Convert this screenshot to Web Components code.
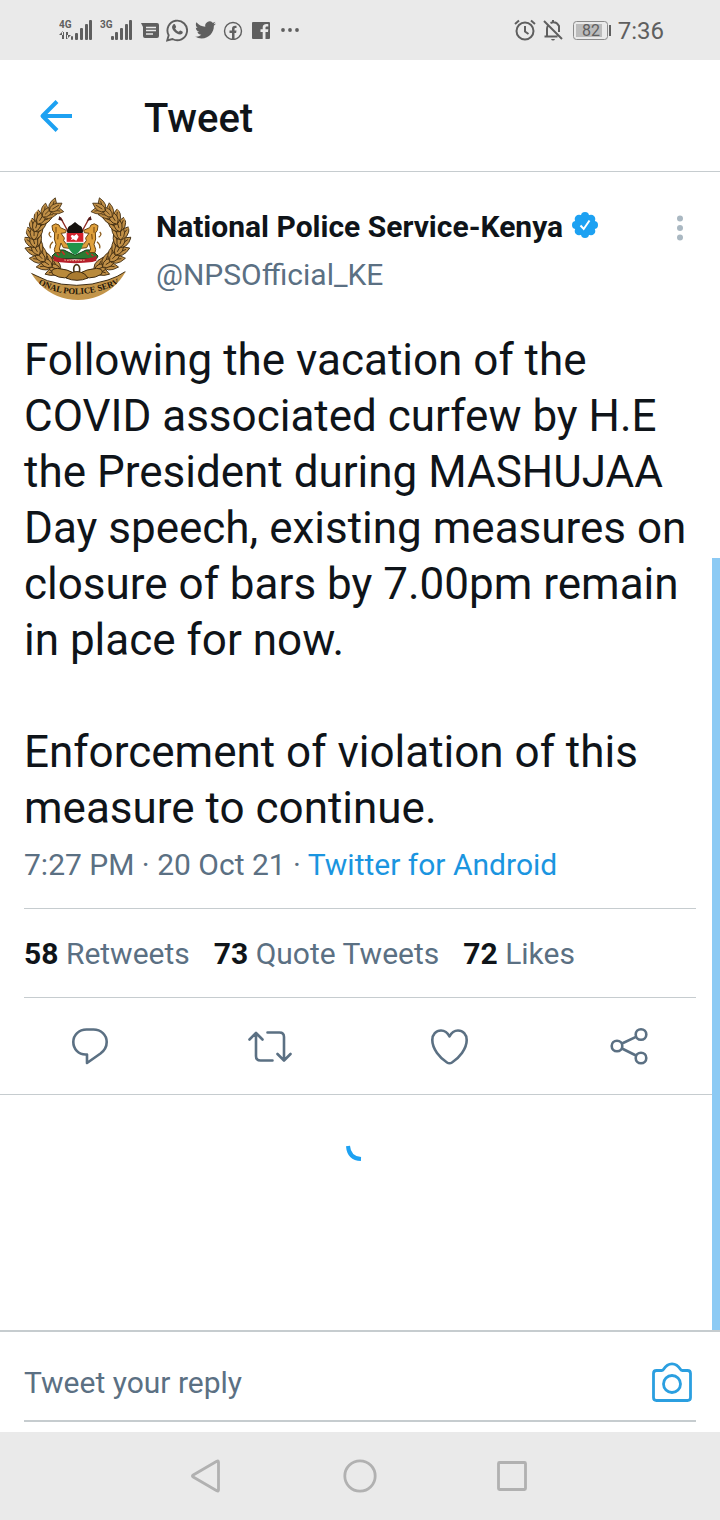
<!DOCTYPE html>
<html lang="en">
<head>
<meta charset="utf-8">
<meta name="viewport" content="width=device-width, initial-scale=1">
<title>Tweet</title>
<style>
  html, body { margin: 0; }
  body {
    --ink: #0f1419; --muted: #5b7083; --blue: #1da1f2; --link: #1b95e0; --line: #c6cccf;
    background: #fff; color: var(--ink);
    font-family: Roboto, "Liberation Sans", sans-serif;
  }
</style>
</head>
<body>
<tweet-screen></tweet-screen>

<template id="t-screen">
  <style>
    :host { display: flex; flex-direction: column; min-height: 100vh; }
    main { position: relative; flex: 1; display: flex; flex-direction: column; }
    .scroll { position: absolute; right: 0; bottom: 0; width: 8px; height: 66.67%; background: #8ccaf4; }
  </style>
  <status-bar></status-bar>
  <title-bar>Tweet</title-bar>
  <main>
    <tweet-post>
      <span slot="name">National Police Service-Kenya</span>
      <span slot="handle">@NPSOfficial_KE</span>
      <span slot="text">Following the vacation of the COVID associated curfew by H.E the President during MASHUJAA Day speech, existing measures on closure of bars by 7.00pm remain in place for now.

Enforcement of violation of this measure to continue.</span>
      <span slot="time">7:27 PM · 20 Oct 21</span>
      <span slot="source">Twitter for Android</span>
      <tweet-stat slot="stats" count="58">Retweets</tweet-stat>
      <tweet-stat slot="stats" count="73">Quote Tweets</tweet-stat>
      <tweet-stat slot="stats" count="72">Likes</tweet-stat>
    </tweet-post>
    <loading-spinner></loading-spinner>
    <div class="scroll"></div>
  </main>
  <reply-box></reply-box>
  <nav-bar></nav-bar>
</template>

<template id="t-status">
  <style>
    :host { display: flex; align-items: center; justify-content: space-between; height: 60px; padding: 0 56px 0 59px; background: #eaeaea; color: #5f5f5f; }
    div { display: flex; align-items: center; gap: 7px; }
    svg { display: block; flex: none; }
    text { font-family: Roboto, sans-serif; fill: #5f5f5f; }
    time { padding-top: 2px; font-size: 24px; line-height: 32px; }
  </style>
  <div>
    <svg width="34" height="24" viewBox="0 0 34 24" fill="#5f5f5f"><text x="0" y="10" font-size="10" font-weight="700">4G</text><path d="M3 14h2v7H3zM4 13l-4 4h4zM7 14h2v7H7zM8 21l4-4H8z"/><rect x="12" y="18" width="2" height="4" rx="1"/><rect x="16" y="15" width="3" height="7" rx="1"/><rect x="21" y="10" width="3" height="12" rx="1"/><rect x="26" y="6" width="3" height="16" rx="1"/><rect x="30" y="2" width="3" height="20" rx="1"/></svg>
    <svg width="34" height="24" viewBox="0 0 34 24" fill="#5f5f5f"><text x="0" y="10" font-size="10" font-weight="700">3G</text><rect x="11" y="18" width="3" height="4" rx="1"/><rect x="15" y="14" width="3" height="8" rx="1"/><rect x="20" y="10" width="3" height="12" rx="1"/><rect x="25" y="6" width="3" height="16" rx="1"/><rect x="29" y="2" width="3" height="20" rx="1"/></svg>
    <svg width="18" height="20" viewBox="0 0 18 20"><path d="M0 3h16q2 0 2 2v11q0 2-2 2H4q-2 0-2-2V7z" fill="#5f5f5f"/><path d="M5 7.500h10M5 10.500h10M5 14h7" stroke="#eaeaea" stroke-width="1.600"/></svg>
    <svg width="22" height="24" viewBox="0 0 22 24"><path d="M1.200 22.500l1.500-5.300A9.800 9.800 0 1 1 6.500 21z" fill="none" stroke="#5f5f5f" stroke-width="1.900"/><path d="M7.300 6.500c1-.9 1.700-.4 2 .4l.8 1.800c.2.600-.8 1.300-.9 1.700.8 1.600 2 2.600 3.600 3.300.5-.2 1-1.400 1.600-1.200l2 1c.7.400.3 1.700-.3 2.200-1.500 1.300-3.400.7-5.200-.2-2.200-1.100-3.900-3.100-4.600-5-.5-1.500-.2-2.900 1-4z" fill="#5f5f5f"/></svg>
    <svg width="21" height="20" viewBox="0 2 24 20"><path fill="#5f5f5f" d="M23.950 4.570a10 10 0 0 1-2.820.770 4.960 4.960 0 0 0 2.160-2.720c-.950.550-2 .960-3.130 1.180a4.920 4.920 0 0 0-8.380 4.480C7.690 8.090 4.070 6.130 1.640 3.160a4.820 4.820 0 0 0-.670 2.480c0 1.710.870 3.210 2.190 4.100a4.900 4.900 0 0 1-2.230-.620v.060a4.920 4.920 0 0 0 3.950 4.830 5 5 0 0 1-2.210.080 4.940 4.940 0 0 0 4.600 3.420A9.870 9.870 0 0 1 0 19.540a14 14 0 0 0 7.550 2.210c9.050 0 14-7.500 14-13.980 0-.210 0-.420-.020-.630a9.940 9.940 0 0 0 2.420-2.570z"/></svg>
    <svg width="22" height="20" viewBox="0 0 22 20"><circle cx="10" cy="11" r="8.500" fill="none" stroke="#5f5f5f" stroke-width="1.400"/><path d="M9 19v-6H6.500v-2.500H9V9c0-2.500 1.400-3.600 4.500-3.200V8c-1.500-.2-2 0-2 1.300v1.200h2l-.4 2.500h-1.600v6z" fill="#5f5f5f"/></svg>
    <svg width="18" height="20" viewBox="0 0 18 20"><path d="M1 2h16q1 0 1 1v15q0 1-1 1h-3.500v-7H16l.3-2.700h-2.800V7.800c0-1 .4-1.300 2.800-1.200V4.200c-4-.5-5.600.7-5.600 3.300v1.800H8.500V12h2.200v7H1q-1 0-1-1V3q0-1 1-1z" fill="#5f5f5f"/></svg>
    <svg width="24" height="20" viewBox="0 0 24 20" fill="#5f5f5f"><circle cx="6" cy="10" r="1.900"/><circle cx="13" cy="10" r="1.900"/><circle cx="20" cy="10" r="1.900"/></svg>
  </div>
  <div>
    <svg width="22" height="24" viewBox="0 0 22 24" fill="none" stroke="#5f5f5f" stroke-width="2"><circle cx="11" cy="13" r="8.500"/><path d="M11 8v5.500l3.500 2.500M1 6l4-3.500M21 6l-4-3.500"/></svg>
    <svg width="20" height="24" viewBox="0 0 20 24" fill="none" stroke="#5f5f5f" stroke-width="2"><path d="M1 3l18 18M1.500 18.500h13M4 18v-7q0-2 1-3.500M7.500 5Q13 2.500 16 8v6M10 2v2"/><path d="M8 21h4q-.5 1.500-2 1.500T8 21z" fill="#5f5f5f" stroke="none"/></svg>
    <svg width="41" height="24" viewBox="0 0 41 24"><rect x="3.500" y="3.500" width="34" height="18" rx="3" fill="none" stroke="#8b8b8b"/><rect x="6" y="6" width="26" height="13" fill="#bcbcbc"/><rect x="39" y="7" width="2" height="11" fill="#5f5f5f"/><text x="21" y="18" text-anchor="middle" font-size="16">82</text></svg>
    <time>7:36</time>
  </div>
</template>

<template id="t-title">
  <style>
    :host { display: flex; align-items: center; gap: 64px; height: 111px; padding: 0 32px; border-bottom: 1px solid var(--line); }
    button { display: block; padding: 0; border: 0; background: none; }
    svg { display: block; }
    h1 { margin: 6px 0 0; font-size: 40px; line-height: 48px; font-weight: 500; }
  </style>
  <button aria-label="Back"><svg width="48" height="48" viewBox="0 0 48 48" fill="none" stroke="#1da1f2" stroke-width="4" stroke-linejoin="round"><path d="M40 24H12M25 9.500L10.500 24 25 38.500"/></svg></button>
  <h1><slot></slot></h1>
</template>

<template id="t-post">
  <style>
    :host { display: block; border-bottom: 1px solid var(--line); }
    header { display: flex; gap: 24px; padding: 20px 24px 32px; }
    nps-emblem { flex: none; }
    .who { flex: 1; min-width: 0; padding-top: 11px; font-size: 30px; line-height: 48px; }
    .name { display: flex; align-items: center; gap: 8px; color: inherit; font-weight: 700; text-decoration: none; }
    .handle { color: var(--muted); }
    button { padding: 0; border: 0; background: none; }
    svg { display: block; flex: none; }
    .more { align-self: flex-start; margin-top: 20px; }
    .text { margin: 0; padding: 0 24px; font-size: 44px; line-height: 56px; white-space: pre-line; }
    .meta { margin: 9px 24px 23px; color: var(--muted); font-size: 30px; line-height: 40px; }
    .meta a { color: var(--link); text-decoration: none; }
    .stats { display: flex; align-items: center; gap: 24px; height: 88px; margin: 0 24px; border: solid var(--line); border-width: 1px 0; }
    .actions { display: flex; height: 96px; }
    .actions button { flex: 1; display: flex; align-items: center; justify-content: center; }
  </style>
  <article>
    <header>
      <nps-emblem></nps-emblem>
      <div class="who">
        <a class="name" href="#profile"><slot name="name"></slot>
          <svg width="28" height="30" viewBox="1 0 28 30"><g fill="#1da1f2"><circle cx="15" cy="13" r="10.500"/><circle cx="15" cy="4" r="4"/><circle cx="21" cy="7" r="4.300"/><circle cx="24" cy="13" r="4"/><circle cx="21" cy="19" r="4.300"/><circle cx="15" cy="22" r="4"/><circle cx="9" cy="19" r="4.300"/><circle cx="6" cy="13" r="4"/><circle cx="9" cy="7" r="4.300"/></g><path d="M10.500 13.500l3.200 3.500 5.800-8.500" fill="none" stroke="#fff" stroke-width="2"/></svg>
        </a>
        <div class="handle"><slot name="handle"></slot></div>
      </div>
      <button class="more" aria-label="More"><svg width="32" height="32" viewBox="0 0 32 32" fill="#aab8c2"><circle cx="16" cy="6.500" r="3"/><circle cx="16" cy="16" r="3"/><circle cx="16" cy="25.500" r="3"/></svg></button>
    </header>
    <p class="text"><slot name="text"></slot></p>
    <div class="meta"><slot name="time"></slot> · <a href="#source"><slot name="source"></slot></a></div>
    <div class="stats"><slot name="stats"></slot></div>
    <div class="actions">
      <button aria-label="Reply"><svg width="48" height="48" viewBox="0 0 48 48" fill="none" stroke="#5b7083" stroke-width="2.600" stroke-linejoin="round"><path d="M20.500 7.500h7C35 7.500 40.700 13 40.700 20c0 5-2.200 8.500-6.200 11.500L21 41v-8.500h-1.500C12.500 32.300 7.300 27 7.300 20S13 7.500 20.500 7.500z"/></svg></button>
      <button aria-label="Retweet"><svg width="48" height="48" viewBox="0 0 48 48" fill="none" stroke="#5b7083" stroke-width="2.600" stroke-linecap="round" stroke-linejoin="round"><path d="M3.500 17.500l6.500-6.500 6.500 6.500M10 11.500v22.500q0 4.500 4.500 4.500h12M21.500 10.500h12q4.500 0 4.500 4.500v23M31.500 32l6.500 6.500 6.500-6.500"/></svg></button>
      <button aria-label="Like"><svg width="48" height="48" viewBox="0 0 48 48" fill="none" stroke="#5b7083" stroke-width="2.600" stroke-linejoin="round"><path d="M23.500 14.500C21.500 10.500 18.500 8.500 15 8.500 10 8.500 6.300 12.500 6.300 18 6.300 27 14 36 21 40.500q2.500 1.600 5 0C33 36 40.700 27 40.700 18c0-5.500-3.700-9.500-8.700-9.500-3.500 0-6.500 2-8.500 6z"/></svg></button>
      <button aria-label="Share"><svg width="48" height="48" viewBox="0 0 48 48" fill="none" stroke="#5b7083" stroke-width="2.600"><circle cx="11" cy="24" r="5.300"/><circle cx="35" cy="12.500" r="5.300"/><circle cx="35" cy="36" r="5.300"/><path d="M16 21.500L30 14.800M16 26.500L30 33.500"/></svg></button>
    </div>
  </article>
</template>

<template id="t-stat">
  <style>
    :host { display: block; padding-top: 2px; font-size: 30px; line-height: 40px; }
    a { color: var(--muted); text-decoration: none; }
    b { color: var(--ink); font-weight: 700; }
  </style>
  <a href="#stat"><b></b> <slot></slot></a>
</template>

<template id="t-emblem">
  <style>
    :host { display: block; width: 108px; height: 108px; }
    svg { display: block; }
  </style>
  <svg width="108" height="108" viewBox="24 6 324 324" role="img" aria-label="National Police Service emblem">
    <clipPath id="round"><circle cx="186" cy="168" r="162"/></clipPath>
    <g clip-path="url(#round)">
      <g id="wreath" fill="#c08f47" stroke="#3d2a10" stroke-width="2.500"></g>
      <path d="M110 253q-10-16 14-18 30 2 54 16-30 24-68 2zM256 253q10-16-14-18-30 2-54 16 30 24 68 2z" fill="#b98a3c" stroke="#3d2a10" stroke-width="3"/>
      <ellipse cx="182" cy="238" rx="9" ry="14" fill="#fff" stroke="#4b3617" stroke-width="5"/>
      <path d="M160 252q22-15 46 0l10 12q-33 14-66 0z" fill="#a97a30" stroke="#3d2a10" stroke-width="3"/>
      <g stroke="#8d2a23" stroke-width="4"><path d="M133 82l24 44M221 82l-24 44"/></g>
      <path d="M127 90l3-12 12 14zM227 90l-3-12-12 14z" fill="#4a1b1b"/>
      <path d="M108 198q24-30 48-12l21 10 21-10q24-18 48 12l-4 8H112z" fill="#2c7a32" stroke="#173d1b" stroke-width="3"/>
      <path d="M122 190l8 6M138 184l8 10M210 186l8 8M226 192l6 6" stroke="#c32f25" stroke-width="5"/>
      <g id="lion"><path d="M108 107q11-10 21-2l4 8 18 8-2 7-14 2 10 14-2 8 8 10 11 4-2 9-18-2-7-14-5 18 5 10-18 1-2-10 5-15-5-16 1-18-6-8z" fill="#dfa03c" stroke="#6a4513" stroke-width="3"/><path d="M111 155q-11 9-8 20M106 142q-12-9-3-16M120 111v17M127 132l-2 16" fill="none" stroke="#8c5b1a" stroke-width="4"/></g>
      <use href="#lion" transform="translate(354) scale(-1 1)"/>
      <path d="M153 124q2-16 12-18l12-10 12 10q10 2 12 18l-2 8h-44z" fill="#16130f"/>
      <path d="M152 129h50v29h-50z" fill="#d4222b"/>
      <path d="M152 158h50q-5 26-25 37-19-11-25-37z" fill="#20944a"/>
      <path d="M151 157h51" stroke="#fff" stroke-width="3"/>
      <path d="M164 139q5-8 10-1l8-6 6 8-7 12-9-4-8 3 4-6z" fill="#fff"/>
      <path d="M112 196l10 6q55 14 110 0l10-6-1 16-12 4q-52 7-104 0l-12-4z" fill="#b61f2b"/>
      <path d="M145 210q32 4 64 0" fill="none" stroke="#f2c7a5" stroke-width="3" stroke-dasharray="5 3"/>
      <path d="M24 240q38 18 70 32 42 14 88 14t94-16q30-10 50-24l24 0q-16 44-50 58-50 32-118 32t-120-34q-34-22-38-62z" fill="#c3954a" stroke="#3d2a10" stroke-width="3"/>
      <path id="band" d="M66 282Q188 350 340 266" fill="none"/>
      <text font-family="Liberation Serif, serif" font-weight="700" font-size="26" fill="#1d1408"><textPath href="#band">ONAL POLICE SERV</textPath></text>
    </g>
  </svg>
</template>

<template id="t-spinner">
  <style>
    :host { display: flex; flex: 1; justify-content: center; padding-top: 34px; }
    svg { display: block; }
  </style>
  <svg width="48" height="48" viewBox="0 0 48 48" role="img" aria-label="Loading"><path d="M12 17Q13 29.500 25 30" fill="none" stroke="#1da1f2" stroke-width="4"/></svg>
</template>

<template id="t-reply">
  <style>
    :host { display: block; padding: 12px 24px 10px; border-top: 2px solid var(--line); }
    div { display: flex; align-items: center; height: 76px; border-bottom: 2px solid var(--line); }
    input { flex: 1; min-width: 0; padding: 2px 0 0; border: 0; outline: 0; background: none; color: var(--ink); font: 30px/40px Roboto, "Liberation Sans", sans-serif; }
    input::placeholder { color: var(--muted); opacity: 1; }
    button { padding: 0; border: 0; background: none; }
    svg { display: block; }
  </style>
  <div>
    <input type="text" aria-label="Tweet your reply" placeholder="Tweet your reply">
    <button aria-label="Add photo"><svg width="48" height="48" viewBox="0 0 48 48" fill="none" stroke="#2b9fe0" stroke-width="2.800" stroke-linejoin="round"><path d="M8.500 12.500H13.500Q14.800 12.500 15.600 11.200C20 4 28 4 32.400 11.200Q33.200 12.500 34.500 12.500h5q3 0 3 3v24q0 3-3 3h-31q-3 0-3-3v-24q0-3 3-3z"/><circle cx="24" cy="26" r="8.500"/></svg></button>
  </div>
</template>

<template id="t-nav">
  <style>
    :host { display: block; background: #eaeaea; }
    nav { display: flex; justify-content: center; gap: 104px; padding: 20px 0; }
    button { padding: 0; border: 0; background: none; }
    svg { display: block; }
  </style>
  <nav>
    <button aria-label="Back"><svg width="48" height="48" viewBox="0 0 48 48" fill="none" stroke="#b1b1b1" stroke-width="2.800" stroke-linejoin="round"><path d="M32.800 9.200q1.700-.8 1.700 1v27.600q0 1.800-1.700 1L9.200 25q-1.600-1 0-2z"/></svg></button>
    <button aria-label="Home"><svg width="48" height="48" viewBox="0 0 48 48" fill="none" stroke="#b1b1b1" stroke-width="2.800"><circle cx="24" cy="24" r="15.200"/></svg></button>
    <button aria-label="Recent apps"><svg width="48" height="48" viewBox="0 0 48 48" fill="none" stroke="#b1b1b1" stroke-width="2.800"><rect x="10.500" y="10.500" width="27" height="27" rx="1"/></svg></button>
  </nav>
</template>

<script>
  const define = (tag, id, setup) => customElements.define(tag, class extends HTMLElement {
    constructor() {
      super();
      this.attachShadow({ mode: 'open' }).append(document.getElementById(id).content.cloneNode(true));
    }
    connectedCallback() { if (setup) setup(this, this.shadowRoot); }
  });

  define('status-bar', 't-status');
  define('title-bar', 't-title');
  define('tweet-stat', 't-stat', (el, root) => { root.querySelector('b').textContent = el.getAttribute('count'); });
  // The wreath is two mirrored arcs of overlapping leaves growing up from the knot.
  define('nps-emblem', 't-emblem', (el, root) => {
    let leaves = '';
    for (const side of [-1, 1]) {
      for (let i = 0; i < 10; i++) {
        const a = (64 - i * 13) * Math.PI / 180;
        const x = 184 + side * 130 * Math.cos(a), y = 144 + 106 * Math.sin(a);
        const heading = Math.atan2(-106 * Math.cos(a), side * 130 * Math.sin(a)) * 180 / Math.PI;
        const size = i > 7 ? 0.9 : 1;
        for (const turn of [-40, 40, 0]) {
          leaves += `<path transform="translate(${x} ${y}) rotate(${heading + turn}) scale(${size})" d="M-8 0Q10-24 42 0 10 24-8 0zM4 0H30"/>`;
        }
      }
    }
    root.getElementById('wreath').innerHTML = leaves;
  });
  define('tweet-post', 't-post');
  define('loading-spinner', 't-spinner');
  define('reply-box', 't-reply');
  define('nav-bar', 't-nav');
  define('tweet-screen', 't-screen');
</script>
</body>
</html>
